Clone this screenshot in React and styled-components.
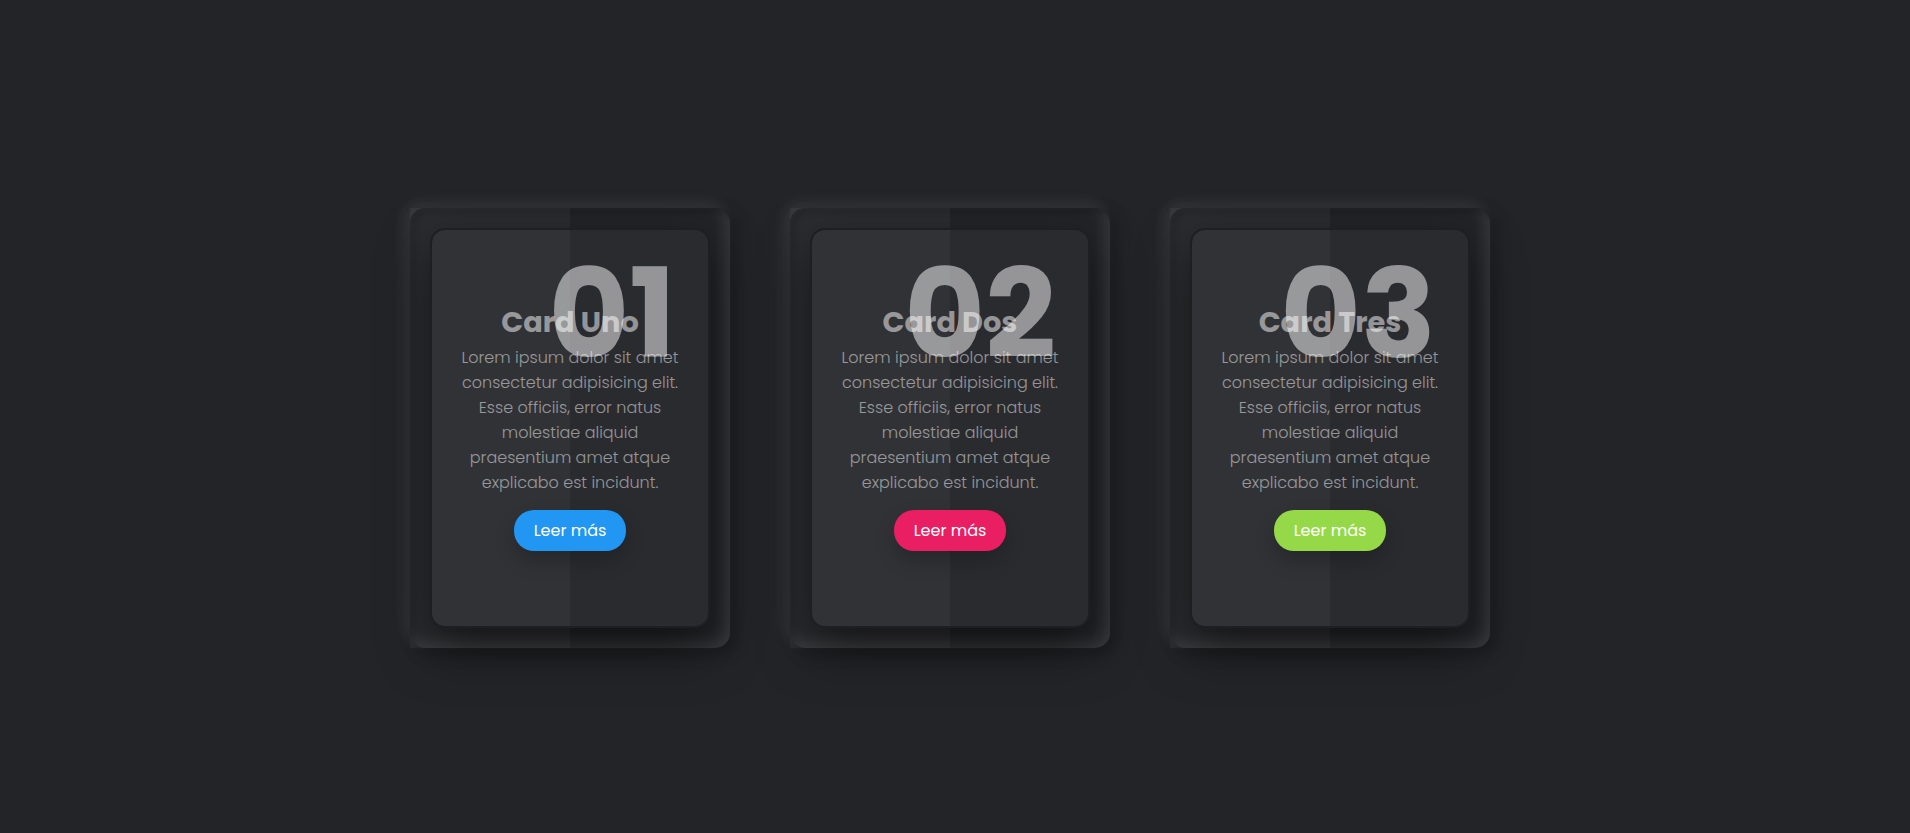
import React from 'react';
import styled, { createGlobalStyle } from 'styled-components';

const GlobalStyle = createGlobalStyle`
  * {
    margin: 0;
    padding: 0;
    box-sizing: border-box;
  }
  body {
    background: #232427;
    font-family: 'Poppins', 'Inter', 'Liberation Sans', sans-serif;
  }
`;

const cards = [
  { num: '01', title: 'Card Uno', color: '#2196f3' },
  { num: '02', title: 'Card Dos', color: '#e91e63' },
  { num: '03', title: 'Card Tres', color: '#95d948' },
];

const lines = [
  'Lorem ipsum dolor sit amet',
  'consectetur adipisicing elit.',
  'Esse officiis, error natus',
  'molestiae aliquid',
  'praesentium amet atque',
  'explicabo est incidunt.',
];

const App = () => {
  return (
    <>
      <GlobalStyle />
      <Page>
        <Container>
          {cards.map((card) => (
            <Card key={card.num}>
              <Box>
                <Number>{card.num}</Number>
                <Content>
                  <Title>{card.title}</Title>
                  <Text>
                    {lines.map((line) => (
                      <Line key={line}>{line}</Line>
                    ))}
                  </Text>
                  <ReadMore href="#" $color={card.color}>Leer más</ReadMore>
                </Content>
              </Box>
            </Card>
          ))}
        </Container>
      </Page>
    </>
  );
};

export default App;

const Page = styled.div`
  display: flex;
  justify-content: center;
  align-items: center;
  min-height: 100vh;
  padding: 23px 10px 0 0;
`;

const Container = styled.div`
  display: flex;
  justify-content: center;
  align-items: center;
  gap: 60px;
`;

const Card = styled.div`
  position: relative;
  width: 320px;
  height: 440px;
  padding: 20px;
  border-radius: 15px;
  box-shadow: inset 5px 5px 5px rgba(0, 0, 0, 0.2),
    inset -5px -5px 15px rgba(255, 255, 255, 0.1),
    5px 5px 15px rgba(0, 0, 0, 0.3),
    -5px -5px 15px rgba(255, 255, 255, 0.1);

  &::before {
    content: '';
    position: absolute;
    top: 0;
    left: 0;
    width: 50%;
    height: 100%;
    background: rgba(255, 255, 255, 0.04);
    pointer-events: none;
  }
`;

const Box = styled.div`
  position: relative;
  width: 100%;
  height: 100%;
  background: #2a2b2f;
  border: 2px solid #1e1f23;
  border-radius: 15px;
  box-shadow: 0 20px 50px rgba(0, 0, 0, 0.5);
  display: flex;
  justify-content: center;
  align-items: center;
  overflow: hidden;

  &::before {
    content: '';
    position: absolute;
    top: 0;
    left: 0;
    width: 50%;
    height: 100%;
    background: rgba(255, 255, 255, 0.035);
    pointer-events: none;
  }
`;

const Number = styled.h2`
  position: absolute;
  top: 22px;
  right: 32px;
  font-size: 124px;
  line-height: 1;
  font-weight: 700;
  color: rgba(255, 255, 255, 0.5);
`;

const Content = styled.div`
  position: relative;
  z-index: 1;
  padding: 20px;
  text-align: center;
`;

const Title = styled.h3`
  font-size: 28.8px;
  line-height: 1.2;
  font-weight: 700;
  color: rgba(255, 255, 255, 0.5);
  margin-bottom: 5px;
`;

const Text = styled.p`
  font-size: 16px;
  line-height: 25px;
  font-weight: 300;
  color: rgba(255, 255, 255, 0.5);
`;

const Line = styled.span`
  display: block;
  white-space: nowrap;
`;

const ReadMore = styled.a`
  display: inline-block;
  margin-top: 15px;
  padding: 8px 20px;
  font-size: 16px;
  line-height: 25px;
  color: #fff;
  text-decoration: none;
  border-radius: 20px;
  background: ${(p) => p.$color};
  box-shadow: 0 10px 20px rgba(0, 0, 0, 0.2);
`;
